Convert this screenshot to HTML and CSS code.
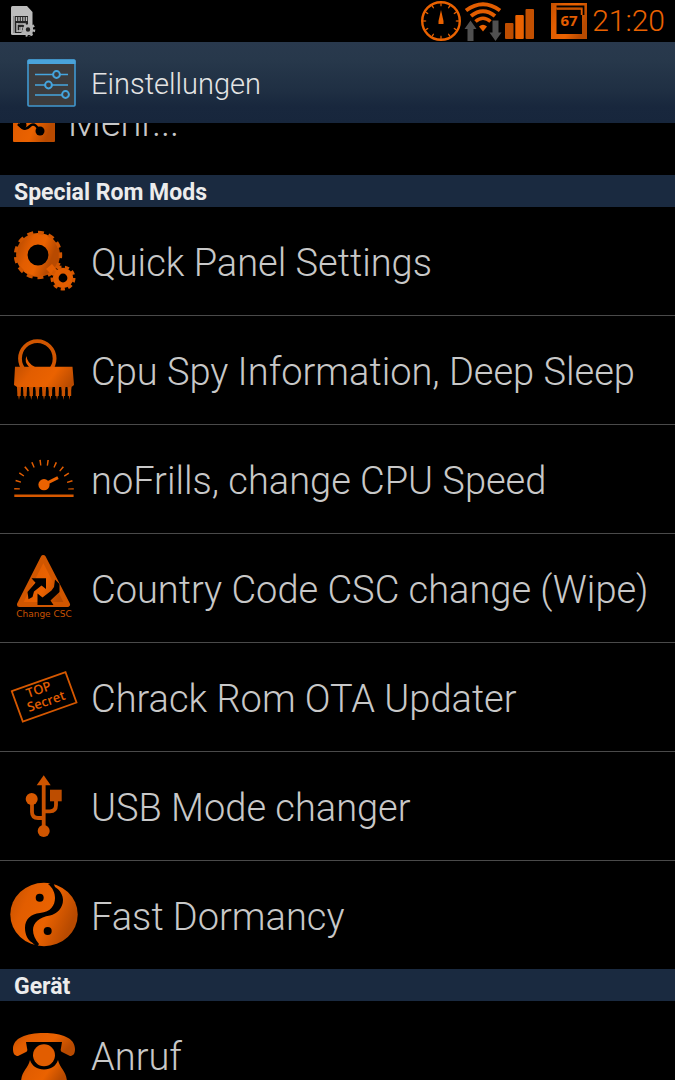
FILE: index.html
```html
<!DOCTYPE html>
<html lang="de">
<head>
    <meta charset="UTF-8">
    <meta name="viewport" content="width=device-width, initial-scale=1.0">
    <title>Einstellungen</title>
    <link rel="stylesheet" href="styles.css">
</head>
<body>
    <!-- Shared gradient for the icons -->
    <svg class="defs" width="0" height="0" aria-hidden="true">
        <defs>
            <linearGradient id="rust" x1="0" y1="0" x2="1" y2="0.4">
                <stop offset="0" stop-color="#c24f00"/>
                <stop offset="0.3" stop-color="#e25d00"/>
                <stop offset="0.65" stop-color="#ea6200"/>
                <stop offset="1" stop-color="#b84a00"/>
            </linearGradient>
        </defs>
    </svg>

    <!-- Status bar -->
    <div class="status-bar">
        <svg class="sim-icon" width="26" height="32" viewBox="0 0 26 32">
            <path d="M2.500 1H17L22.500 7V28.500Q22.500 30 21 30H2.500Q1 30 1 28.500V2.500Q1 1 2.500 1Z" fill="#bcbcbc"/>
            <path d="M3 11H18V28H3Z" fill="#222"/>
            <path d="M4 11V28M6.500 12V16M9 12V16M11.500 12V16M14 12V16M16.500 12V16M7 18V27M7 19H14M10 22V27M7 26H13" stroke="#bcbcbc" stroke-width="1.400"/>
            <circle cx="18" cy="24.500" r="5.800" fill="none" stroke="#b4b4b4" stroke-width="3" pathLength="16" stroke-dasharray="1 1"/>
            <circle cx="18" cy="24.500" r="3.700" fill="#222" stroke="#b4b4b4" stroke-width="3"/>
        </svg>
        <div class="status-icons">
            <svg width="42" height="42" viewBox="0 0 42 42">
                <circle cx="21" cy="21" r="18.800" fill="none" stroke="#ea6200" stroke-width="2.400"/>
                <circle cx="21" cy="21" r="16.300" fill="none" stroke="#ea6200" stroke-width="3" pathLength="120" stroke-dasharray="1.500 8.500" stroke-dashoffset="0.750"/>
                <path d="M21 10L23.500 21V24H18.500V21Z" fill="#ea6200"/>
            </svg>
            <svg width="42" height="42" viewBox="0 0 42 42">
                <g fill="none" stroke="#e25d00">
                    <path d="M4 10.500Q21 -2 38 10.500" stroke-width="4"/>
                    <path d="M9 16Q21 6.500 33 16" stroke-width="4"/>
                    <path d="M13.500 21.500Q21 15 28.500 21.500" stroke-width="3.600"/>
                </g>
                <path d="M17 26.500Q21 23 25 26.500L21 31.500Z" fill="#ea6200"/>
                <path d="M8.500 20.500L14.500 29H11.500V41H5.500V29H2.500ZM33.500 41L27.500 32.500H30.500V20.500H36.500V32.500H39.500Z" fill="#505050"/>
            </svg>
            <svg class="signal-icon" width="29" height="42" viewBox="0 0 29 42">
                <rect x="0" y="23" width="8.500" height="16" rx="1" fill="#bd4d00"/>
                <rect x="10.300" y="15" width="8.500" height="24" rx="1" fill="#ea6200"/>
                <rect x="20.500" y="9" width="8.500" height="30" rx="1" fill="#c24f00"/>
            </svg>
            <svg class="battery-icon" width="36" height="42" viewBox="0 0 36 42">
                <path fill-rule="evenodd" d="M0 3H36V39H0ZM5.500 8.500V34H31V8.500Z" fill="url(#rust)"/>
                <path d="M5.500 6.500H32.500V15" fill="none" stroke="#000" stroke-width="1.800"/>
                <path d="M5.500 9H30.500V15" fill="none" stroke="#e25d00" stroke-width="1.500"/>
                <text x="18" y="26" text-anchor="middle" class="battery-level">67</text>
            </svg>
            <span class="clock">21:20</span>
        </div>
    </div>

    <!-- Action bar -->
    <header class="action-bar">
        <svg width="50" height="48" viewBox="0 0 50 48">
            <rect x="1" y="1" width="47" height="46" rx="1" fill="#3c3c3e" stroke="#4098d0" stroke-width="1.600"/>
            <path d="M0.500 5V2Q0.500 0.500 2 0.500H47Q48.500 0.500 48.500 2V5Z" fill="#4aa3da"/>
            <g fill="none" stroke="#45a5de" stroke-width="1.600">
                <path d="M8 15.500H26M33 15.500H41M8 26H18M25 26H41M8 36H36"/>
                <circle cx="29.500" cy="15.500" r="3.400" stroke-width="2"/>
                <circle cx="21.500" cy="26" r="3.400" stroke-width="2"/>
                <circle cx="38.500" cy="35.500" r="3.400" stroke-width="2"/>
            </g>
        </svg>
        <h1>Einstellungen</h1>
    </header>

    <!-- Settings list, scrolled part of the way down -->
    <main class="settings">
        <ul class="scrolled">
            <li>
                <a href="#mehr">
                    <svg class="small-icon" width="42" height="42" viewBox="0 0 42 42">
                        <rect width="42" height="42" rx="1" fill="url(#rust)"/>
                        <path d="M5 24C11 30 13 30 17 26S25 27 27 32" fill="none" stroke="#000" stroke-width="2.500"/>
                        <circle cx="10" cy="25" r="3.500"/>
                        <circle cx="27" cy="31" r="4.500"/>
                    </svg>
                    <span>Mehr...</span>
                </a>
            </li>
        </ul>

        <h2>Special Rom Mods</h2>
        <ul>
            <li>
                <a href="#quick-panel">
                    <svg width="68" height="68" viewBox="0 0 68 68">
                        <circle cx="28" cy="28" r="16.200" fill="none" stroke="url(#rust)" stroke-width="11.500"/>
                        <circle cx="28" cy="28" r="22.500" fill="none" stroke="#cf5500" stroke-width="3.400" pathLength="26" stroke-dasharray="1.100 0.900" stroke-dashoffset="0.500"/>
                        <path d="M42 37L48 44L43 49L36 42Z" fill="#e25d00"/>
                        <circle cx="53" cy="51" r="7.300" fill="none" stroke="#e25d00" stroke-width="5.800"/>
                        <circle cx="53" cy="51" r="11" fill="none" stroke="#d65800" stroke-width="3" pathLength="18" stroke-dasharray="1.100 0.900"/>
                    </svg>
                    <span>Quick Panel Settings</span>
                </a>
            </li>
            <li>
                <a href="#cpu-spy">
                    <svg width="68" height="68" viewBox="0 0 68 68">
                        <circle cx="27.300" cy="22.500" r="17.300" fill="none" stroke="#cf5500" stroke-width="3.800"/>
                        <path d="M16.500 20Q17 27 25 31H19Q14 26 16.500 20Z" fill="#e25d00"/>
                        <path d="M5 30.700H62.500L64 49L61.500 51L59.500 64L57.500 51H55.500L53.400 64L51.300 51H49.200L47 64L45 51H42.500L40.400 64L38.300 51H36.200L34 64L32 51H29.500L27.400 64L25.300 51H23.300L21.200 64L19.100 51H17.100L15 64L13 51H11L9 64L7 51L4 49Z" fill="url(#rust)"/>
                        <path d="M9 51V60M15 51V60M21.200 51V60M27.400 51V60M34 51V60M40.400 51V60M47 51V60M53.400 51V60M59.500 51V60" stroke="#c85200" stroke-width="3.400"/>
                    </svg>
                    <span>Cpu Spy Information, Deep Sleep</span>
                </a>
            </li>
            <li>
                <a href="#nofrills">
                    <svg width="68" height="68" viewBox="0 0 68 68">
                        <path d="M7 44.500A27 27 0 0 1 61 44.500" fill="none" stroke="#e25d00" stroke-width="5.600" pathLength="97.200" stroke-dasharray="1.700 7"/>
                        <path d="M4.300 50.700H63.600" stroke="#d65800" stroke-width="2.600"/>
                        <path d="M34 39.700L48 32.700" stroke="#ea6200" stroke-width="3"/>
                        <circle cx="34" cy="39.700" r="5.600" fill="#ea6200"/>
                    </svg>
                    <span>noFrills, change CPU Speed</span>
                </a>
            </li>
            <li>
                <a href="#csc">
                    <svg width="68" height="68" viewBox="0 0 68 68">
                        <path d="M33.300 3.500L57.500 50.500H9.500Z" fill="url(#rust)" stroke="#d05600" stroke-width="5" stroke-linejoin="round"/>
                        <path d="M18.500 45.300L17.500 38L25.500 28.700L21.500 24.300H36V35L31.500 31.500L24 37.500L22.500 43Z"/>
                        <path d="M45 25.500L49.500 30V38L40.500 46.500L43.500 51H27.500V39.500L32.500 43.500L41.500 36.500L44 33Z"/>
                        <text x="34" y="63" text-anchor="middle" class="csc-label">Change CSC</text>
                    </svg>
                    <span>Country Code CSC change (Wipe)</span>
                </a>
            </li>
            <li>
                <a href="#ota">
                    <svg width="68" height="68" viewBox="0 0 68 68">
                        <path d="M1.800 28.200L55.500 9.200L66.500 39.500L12.800 58.500Z" fill="none" stroke="#d65800" stroke-width="1.800"/>
                        <text transform="translate(18 35) rotate(-19)" class="stamp">TOP</text>
                        <text transform="translate(19 49) rotate(-19)" class="stamp">Secret</text>
                    </svg>
                    <span>Chrack Rom OTA Updater</span>
                </a>
            </li>
            <li>
                <a href="#usb">
                    <svg width="68" height="68" viewBox="0 0 68 68">
                        <g fill="none" stroke="#c85200" stroke-width="3.800">
                            <path d="M33.700 10V59"/>
                            <path d="M22 28V40Q22 46 28 46H34"/>
                            <path d="M46 28V33Q46 39.300 40 39.300H34"/>
                        </g>
                        <path d="M33.700 3.300L40.700 13.300H26.700Z" fill="#cf5500"/>
                        <circle cx="21.700" cy="27" r="6" fill="#d65800"/>
                        <circle cx="33.700" cy="59" r="6" fill="#cf5500"/>
                        <rect x="40" y="17.700" width="11.700" height="11.600" fill="#bd4d00"/>
                    </svg>
                    <span>USB Mode changer</span>
                </a>
            </li>
            <li>
                <a href="#fast-dormancy">
                    <svg width="68" height="68" viewBox="0 0 68 68">
                        <ellipse cx="34" cy="33.500" rx="33.700" ry="31.700" fill="url(#rust)"/>
                        <path d="M43 1L45 6C50 9 53 14 53 19C53 27 47 33 40 34.500C29 36 23 42 23 49C23 54 25 58 29 63L27 66L22 61.500C18 59 15 54 15 47C15 38 21 33 30 32C41 31 45 24 45 17C45 12 43 7 38 3Z"/>
                        <circle cx="29.700" cy="16.700" r="4"/>
                        <circle cx="37.700" cy="50" r="4"/>
                    </svg>
                    <span>Fast Dormancy</span>
                </a>
            </li>
        </ul>

        <h2>Gerät</h2>
        <ul>
            <li>
                <a href="#anruf">
                    <svg width="68" height="68" viewBox="0 0 68 68">
                        <path d="M3 28C3 17 16 12 34 12S65 17 65 28C65 33 63 35 60 35L52 31Q50 30 51 27L52 21H16L17 27Q18 30 16 31L8 35C5 35 3 33 3 28Z" fill="url(#rust)"/>
                        <path d="M20 39C22 45 27 48.500 34 48.500S46 45 48 39C50 48 57 50 57 62V66H11V62C11 50 18 48 20 39Z" fill="url(#rust)"/>
                        <circle cx="34" cy="34.300" r="11" fill="#e25d00"/>
                    </svg>
                    <span>Anruf</span>
                </a>
            </li>
        </ul>
    </main>
</body>
</html>
```
FILE: styles.css
```css
* {
    box-sizing: border-box;
}

body {
    margin: 0;
    height: 100vh;
    display: flex;
    flex-direction: column;
    overflow: hidden;
    background-color: #000;
    color: #c8c8c8;
    font-family: Roboto, sans-serif;
    font-weight: 300;
}

svg {
    display: block;
    flex: none;
}

.defs {
    position: absolute;
}

/* Status bar */
.status-bar {
    height: 42px;
    flex: none;
    display: flex;
    align-items: center;
    justify-content: space-between;
    padding: 0 10px;
}

.status-icons {
    display: flex;
    align-items: center;
}

.signal-icon {
    margin-left: 1px;
}

.battery-icon {
    margin: 0 5px 0 17px;
}

.battery-level {
    font: bold 15px "Open Sans", sans-serif;
    fill: #e25d00;
}

.clock {
    font-size: 30px;
    line-height: 42px;
    color: #ea6200;
}

/* Action bar */
.action-bar {
    height: 81px;
    flex: none;
    display: flex;
    align-items: center;
    gap: 14px;
    padding: 0 27px;
    background: linear-gradient(#29394d 0%, #27384b 22%, #1f2f43 60%, #18273d 80%, #17263c 100%);
}

.action-bar h1 {
    margin: 0;
    padding-top: 2px;
    font-size: 29px;
    font-weight: 300;
    color: #e4e4e4;
}

/* Settings list */
.settings {
    flex: 1;
    min-height: 0;
    overflow: hidden;
}

.settings ul {
    margin: 0;
    padding: 0;
    list-style: none;
}

.settings .scrolled {
    margin-top: -56px;
}

.settings li + li {
    border-top: 1px solid #4a4a4a;
}

.settings a {
    height: 108px;
    display: flex;
    align-items: center;
    gap: 13px;
    padding: 0 10px;
    color: inherit;
    font-size: 38px;
    white-space: nowrap;
    text-decoration: none;
}

.settings a span {
    padding-top: 4px;
}

.small-icon {
    margin-left: 3px;
}

.settings h2 {
    margin: 0;
    padding: 3px 14px 0;
    background-color: #1a2a40;
    color: #ececec;
    font-size: 23px;
    font-weight: 700;
    line-height: 29px;
}

/* Lettering inside the icons */
.csc-label {
    font: 9px "DejaVu Sans", sans-serif;
    fill: #c85200;
}

.stamp {
    font: 600 13px "Open Sans", sans-serif;
    fill: #e25d00;
}
```
